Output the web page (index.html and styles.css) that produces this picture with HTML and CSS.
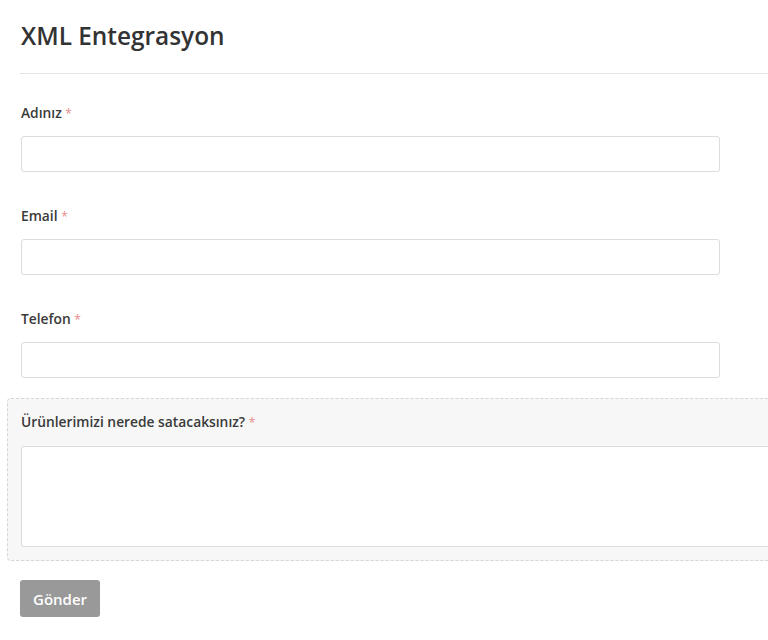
FILE: index.html
```html
<!DOCTYPE html>
<html lang="tr">
<head>
<meta charset="utf-8">
<title>XML Entegrasyon</title>
<link rel="stylesheet" href="styles.css">
</head>
<body>
<div class="page">
  <h1 class="title">XML Entegrasyon</h1>
  <hr class="divider">
  <form class="form">
    <div class="field">
      <label class="label">Adınız <span class="req">*</span></label>
      <input class="input" type="text">
    </div>
    <div class="field">
      <label class="label">Email <span class="req">*</span></label>
      <input class="input" type="email">
    </div>
    <div class="field">
      <label class="label">Telefon <span class="req">*</span></label>
      <input class="input" type="tel">
    </div>
    <div class="box">
      <label class="label box-label">Ürünlerimizi nerede satacaksınız? <span class="req">*</span></label>
      <textarea class="textarea"></textarea>
    </div>
    <button class="btn" type="button">Gönder</button>
  </form>
</div>
</body>
</html>
```
FILE: styles.css
```css
html, body {
  margin: 0;
  padding: 0;
  background: #fff;
  overflow: hidden;
}
body {
  font-family: "Open Sans", "Noto Sans", sans-serif;
  color: #333;
}
.page {
  padding: 20px 0 0 20px;
  overflow: hidden;
}
.title {
  margin: 0 0 0 1px;
  font-size: 24.4px;
  font-weight: 600;
  line-height: 32px;
  color: #333;
}
.divider {
  margin: 21px 0 29px 0;
  border: 0;
  border-top: 1px solid #e3e3e3;
  height: 0;
}
.form {
  display: flex;
  flex-direction: column;
  align-items: flex-start;
}
.field {
  display: flex;
  flex-direction: column;
  margin-bottom: 34px;
  margin-left: 1px;
}
.field:nth-child(3) {
  margin-bottom: 20px;
}
.label {
  display: block;
  height: 20px;
  font-size: 13.8px;
  font-weight: 600;
  line-height: 20px;
  margin-bottom: 13px;
  color: #3a3a3a;
}
.req {
  color: #e88a8a;
  font-weight: 400;
  font-size: 12px;
  line-height: 1;
}
.input {
  box-sizing: border-box;
  width: 699px;
  height: 36px;
  border: 1px solid #dcdcdc;
  border-radius: 3px;
  background: #fff;
  margin: 0;
}
.box {
  box-sizing: border-box;
  width: 800px;
  margin-left: -13px;
  padding: 13px 13px 13px 13px;
  background: #f7f7f7;
  border: 1px dashed #d6d6d6;
  border-radius: 4px;
  display: flex;
  flex-direction: column;
}
.box-label {
  margin-bottom: 14px;
}
.textarea {
  box-sizing: border-box;
  width: 100%;
  height: 101px;
  border: 1px solid #dcdcdc;
  border-radius: 3px;
  background: #fff;
  resize: none;
  margin: 0;
}
.btn {
  margin-top: 19px;
  height: 37px;
  padding: 0 13px;
  border: 0;
  border-radius: 3px;
  background: #999;
  color: #fff;
  font-family: "Open Sans", "Noto Sans", sans-serif;
  font-size: 15px;
  font-weight: 600;
}
```
